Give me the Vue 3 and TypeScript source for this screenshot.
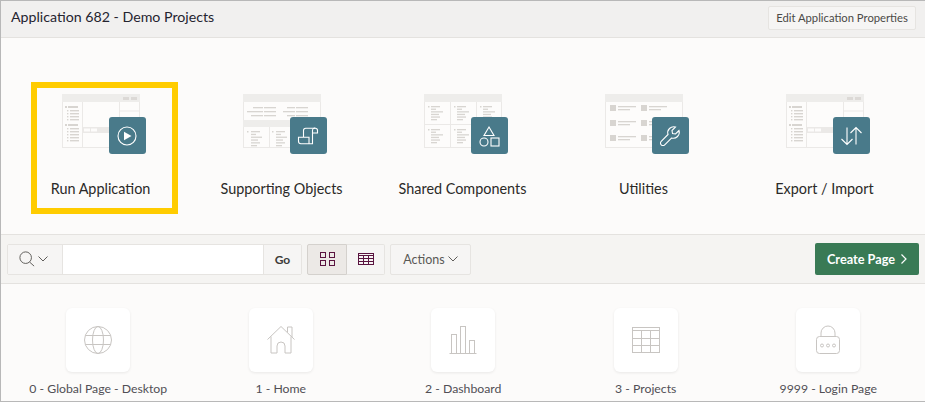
<template>
  <div class="page">
    <header class="title_bar">
      <h1 class="title">Application 682 - Demo Projects</h1>
      <button class="edit_btn">Edit Application Properties</button>
    </header>

    <section class="tiles">
      <a v-for="tile in tiles" :key="tile.label" class="tile">
        <div class="art">
          <!-- 页面线框图 -->
          <svg class="wire" width="78" height="54" viewBox="0 0 78 54">
            <rect x="0.5" y="0.5" width="77" height="53" fill="#fdfcfb" stroke="#ebe9e7" />
            <rect x="0" y="0" width="78" height="8" fill="#eeedeb" />

            <g v-if="tile.wire === 'builder'">
              <rect x="61" y="3" width="6" height="3" fill="#dcd9d6" />
              <rect x="69" y="3" width="6" height="3" fill="#dcd9d6" />
              <path d="M20.5 8V54M57.5 8V54M57.5 17H78M57.5 29H78" stroke="#ebe9e7" fill="none" />
              <rect x="21" y="33" width="37" height="6" fill="#ebe9e7" />
              <rect x="22" y="34.5" width="6" height="3" fill="#fdfcfb" />
              <rect x="29" y="34.5" width="6" height="3" fill="#fdfcfb" />
              <rect x="3" y="12" width="2" height="2" fill="#d8d5d1" />
              <rect x="6" y="12" width="10" height="2" fill="#d8d5d1" />
              <rect x="3" y="30" width="2" height="2" fill="#d8d5d1" />
              <rect x="6" y="30" width="10" height="2" fill="#d8d5d1" />
              <rect v-for="y in [16, 19, 22, 25, 34, 37, 40, 43, 46]" :key="y" x="8" :y="y" width="9" height="1.4" fill="#d8d5d1" />
              <rect v-for="y in [16, 19, 22, 25, 34, 37, 40, 43, 46]" :key="'d' + y" x="5" :y="y" width="1.4" height="1.4" fill="#d8d5d1" />
            </g>

            <g v-if="tile.wire === 'objects'">
              <path d="M26.5 33V54M52.5 33V54" stroke="#ebe9e7" fill="none" />
              <rect x="0" y="26" width="78" height="7" fill="#eeedeb" />
              <g fill="#d8d5d1">
                <rect v-for="r in formLines" :key="r.x + '-' + r.y" :x="r.x" :y="r.y" :width="r.w" height="1.3" />
                <rect v-for="c in [4, 29, 54]" :key="c" :x="c" y="37" width="1.5" height="1.5" />
                <template v-for="c in [8, 33, 58]" :key="c">
                  <rect v-for="(w, i) in [9, 5, 11, 7, 9, 6]" :key="i" :x="c" :y="37 + i * 2.8" :width="w" height="1.3" />
                </template>
              </g>
            </g>

            <g v-if="tile.wire === 'shared'">
              <path d="M26.5 8V54M52.5 8V54M0 30.5H78" stroke="#ebe9e7" fill="none" />
              <g fill="#d8d5d1">
                <template v-for="row in [12, 35]" :key="row">
                  <template v-for="c in [4, 30, 56]" :key="c">
                    <rect :x="c" :y="row" width="1.5" height="1.5" />
                    <rect v-for="(w, i) in [9, 5, 12, 8, 9, 6]" :key="i" :x="c + 3" :y="row + i * 2.6" :width="w" height="1.3" />
                  </template>
                </template>
              </g>
            </g>

            <g v-if="tile.wire === 'list'">
              <g v-for="y in [13, 28, 43]" :key="y" fill="#d8d5d1">
                <template v-for="x in [5, 36]" :key="x">
                  <rect :x="x" :y="y - 2" width="6" height="6" />
                  <rect :x="x + 8" :y="y - 1" width="18" height="1.3" />
                  <rect :x="x + 8" :y="y + 2" width="12" height="1.3" />
                </template>
              </g>
            </g>
          </svg>

          <!-- 图标块 -->
          <div class="badge">
            <svg width="24" height="24" viewBox="0 0 24 24" fill="none" stroke="#fff" stroke-width="1.1">
              <g v-if="tile.badge === 'play'">
                <circle cx="12" cy="12" r="9" />
                <path d="M9 7.8L16.5 12L9 16.2Z" fill="#fff" stroke="none" />
              </g>
              <g v-if="tile.badge === 'scroll'">
                <path d="M7.5 13V6.5A2.3 2.3 0 0 1 9.8 4.2H19.300A2.200 2.200 0 0 1 21.500 6.400V9H16.500" />
                <path d="M19.300 4.200A2.200 2.200 0 0 0 16.500 6.400V19.800H5A2.500 2.500 0 0 1 2.500 17.300V13.200H13V19.800" />
              </g>
              <g v-if="tile.badge === 'shapes'">
                <path d="M12 3L17 11.5H7Z" />
                <circle cx="7" cy="18" r="4" />
                <rect x="14" y="14" width="8" height="8" />
              </g>
              <g v-if="tile.badge === 'wrench'">
                <path d="M21 6.5L17.5 10L14.5 9.5L14 6.5L17.5 3A6 6 0 0 0 10 10.5L3.2 17.3A2.4 2.4 0 0 0 6.7 20.8L13.5 14A6 6 0 0 0 21 6.5Z" />
              </g>
              <g v-if="tile.badge === 'arrows'">
                <path d="M8 3.5V20.5M2.5 15L8 20.5L13.5 15" />
                <path d="M17 20.5V3.5M11.5 9L17 3.5L22.5 9" />
              </g>
            </svg>
          </div>
        </div>
        <span class="tile_label">{{ tile.label }}</span>
      </a>
      <div class="highlight"></div>
    </section>

    <section class="toolbar">
      <div class="search">
        <button class="search_icon">
          <svg width="16" height="16" viewBox="0 0 18 18" fill="none" stroke="#5f5d5a" stroke-width="1.100">
            <circle cx="7.5" cy="7.5" r="6.5" />
            <path d="M12 12.5L17 17" />
          </svg>
          <svg width="10" height="6" viewBox="0 0 10 6" fill="none" stroke="#5f5d5a" stroke-width="1">
            <path d="M0.5 0.5L5 5L9.500 0.5" />
          </svg>
        </button>
        <div class="search_input"></div>
        <button class="go">Go</button>
      </div>

      <div class="views">
        <button class="view active">
          <svg width="15" height="14" viewBox="0 0 15 14" fill="none" stroke="#5a1440" stroke-width="1">
            <rect x="0.500" y="0.500" width="5" height="5" />
            <rect x="9.500" y="0.500" width="5" height="5" />
            <rect x="0.500" y="8.500" width="5" height="5" />
            <rect x="9.500" y="8.500" width="5" height="5" />
          </svg>
        </button>
        <button class="view">
          <svg width="16" height="12" viewBox="0 0 16 12" fill="none" stroke="#5a1440" stroke-width="1">
            <rect x="0.500" y="0.500" width="15" height="11" />
            <path d="M0.500 2.500H15.500M0.500 5.500H15.500M0.500 8.500H15.500M5.500 2.500V11.500M10.500 2.500V11.500" />
          </svg>
        </button>
      </div>

      <button class="actions">
        Actions
        <svg width="10" height="6" viewBox="0 0 10 6" fill="none" stroke="#5f5d5a" stroke-width="1">
          <path d="M0.500 0.500L5 5L9.500 0.500" />
        </svg>
      </button>

      <button class="create">
        Create Page
        <svg width="6" height="10" viewBox="0 0 6 10" fill="none" stroke="#fff" stroke-width="1.200">
          <path d="M0.500 0.500L5 5L0.500 9.500" />
        </svg>
      </button>
    </section>

    <section class="pages">
      <a v-for="p in pages" :key="p.label" class="page_item">
        <div class="page_card">
          <svg width="30" height="30" viewBox="0 0 30 30" fill="none" stroke="#c8c5c2" stroke-width="1">
            <g v-if="p.icon === 'globe'">
              <circle cx="15" cy="15" r="13.500" />
              <ellipse cx="15" cy="15" rx="5.500" ry="13.500" />
              <path d="M2.500 10.500H27.500M2.500 19.500H27.500" />
            </g>
            <g v-if="p.icon === 'home'">
              <path d="M1.500 14.500L15 1.500L28.500 14.500" />
              <path d="M5 11.500V28H11V21A4 4 0 0 1 19 21V28H25V11.500" />
              <path d="M21.500 7.500V2H26V12" />
            </g>
            <g v-if="p.icon === 'chart'">
              <rect x="3.500" y="9.500" width="5" height="19" />
              <rect x="12.500" y="1.500" width="5" height="27" />
              <rect x="21.500" y="15.500" width="5" height="13" />
              <path d="M1.500 28.500H28.500" />
            </g>
            <g v-if="p.icon === 'table'">
              <rect x="1.500" y="2.500" width="27" height="25" />
              <path d="M1.500 5.500H28.500M1.500 13.500H28.500M1.500 20.500H28.500M10.500 5.500V27.500M19.500 5.500V27.500" />
            </g>
            <g v-if="p.icon === 'lock'">
              <rect x="3.500" y="11.500" width="23" height="17" rx="3" />
              <path d="M8 11.500V8A7 7 0 0 1 22 8V11.500" />
              <circle cx="9" cy="20.500" r="1.500" />
              <circle cx="15" cy="20.500" r="1.500" />
              <circle cx="21" cy="20.500" r="1.500" />
            </g>
          </svg>
        </div>
        <span class="page_label">{{ p.label }}</span>
      </a>
    </section>
  </div>
</template>

<script setup lang="ts">
const tiles = [
  { label: 'Run Application', wire: 'builder', badge: 'play' },
  { label: 'Supporting Objects', wire: 'objects', badge: 'scroll' },
  { label: 'Shared Components', wire: 'shared', badge: 'shapes' },
  { label: 'Utilities', wire: 'list', badge: 'wrench' },
  { label: 'Export / Import', wire: 'builder', badge: 'arrows' },
]

const pages = [
  { label: '0 - Global Page - Desktop', icon: 'globe' },
  { label: '1 - Home', icon: 'home' },
  { label: '2 - Dashboard', icon: 'chart' },
  { label: '3 - Projects', icon: 'table' },
  { label: '9999 - Login Page', icon: 'lock' },
]

// 上半部分的表单线条
const formLines = [
  { x: 10, y: 13, w: 10 }, { x: 21, y: 13, w: 12 }, { x: 4, y: 17, w: 16 }, { x: 21, y: 17, w: 12 }, { x: 8, y: 21, w: 12 }, { x: 21, y: 21, w: 12 },
  { x: 44, y: 13, w: 8 }, { x: 53, y: 13, w: 12 }, { x: 40, y: 17, w: 12 }, { x: 53, y: 17, w: 12 }, { x: 44, y: 21, w: 8 }, { x: 53, y: 21, w: 12 },
]
</script>

<style>
html,
body {
  margin: 0;
  background: #fcfbfa;
}
</style>

<style scoped>
.page {
  box-sizing: border-box;
  width: 925px;
  height: 402px;
  overflow: hidden;
  display: flex;
  flex-direction: column;
  border-top: 1px solid #b8b8b8;
  border-left: 1px solid #b8b8b8;
  border-bottom: 1px solid #b8b8b8;
  background: #fcfbfa;
  font-family: Lato, "Open Sans", sans-serif;
  color: #2b2a28;
}

button {
  font-family: inherit;
  cursor: pointer;
}

.title_bar {
  height: 37px;
  flex: none;
  box-sizing: border-box;
  display: flex;
  align-items: center;
  justify-content: space-between;
  padding: 0 9px 3px 10px;
  background: #f1f0ef;
  border-bottom: 1px solid #e4e2df;
}

.title {
  margin: 0 0 2px;
  font-size: 14.200px;
  font-weight: 400;
  color: #25242f;
}

.edit_btn {
  height: 24px;
  width: 148px;
  padding: 0;
  font-size: 11.250px;
  color: #4a4946;
  background: #f6f5f4;
  border: 1px solid #e6e4e1;
  border-radius: 2px;
}

.tiles {
  position: relative;
  height: 196px;
  flex: none;
  box-sizing: border-box;
  display: grid;
  grid-template-columns: repeat(5, 181px);
  padding: 56px 0 0 9px;
}

.tile {
  display: flex;
  flex-direction: column;
  align-items: center;
}

.art {
  position: relative;
  width: 78px;
  height: 60px;
}

.wire {
  display: block;
}

.badge {
  position: absolute;
  left: 47px;
  top: 23px;
  width: 37px;
  height: 37px;
  display: flex;
  align-items: center;
  justify-content: center;
  border-radius: 3px;
  background: #497a8a;
}

.tile_label {
  margin-top: 25px;
  font-size: 14.400px;
  line-height: 20px;
  white-space: nowrap;
}

/* 黄色标注框 */
.highlight {
  position: absolute;
  left: 30px;
  top: 44px;
  width: 147px;
  height: 132px;
  box-sizing: border-box;
  border: 6px solid #ffcc00;
}

.toolbar {
  height: 50px;
  flex: none;
  box-sizing: border-box;
  display: flex;
  align-items: center;
  gap: 5px;
  padding: 0 6px 0 6px;
  background: #f5f4f2;
  border-top: 1px solid #e4e2df;
  border-bottom: 1px solid #e4e2df;
}

.search {
  width: 295px;
  height: 31px;
  box-sizing: border-box;
  display: flex;
  border: 1px solid #e6e4e1;
  border-radius: 2px;
}

.search_icon {
  width: 55px;
  display: flex;
  align-items: center;
  justify-content: center;
  gap: 3px;
  padding: 0 4px 0 0;
  border: 0;
  border-right: 1px solid #e6e4e1;
  background: #f6f5f4;
}

.search_input {
  flex: 1;
  background: #fff;
}

.go {
  width: 38px;
  padding: 0;
  border: 0;
  border-left: 1px solid #e6e4e1;
  background: #f6f5f4;
  font-size: 12px;
  font-weight: 700;
  color: #3c3b39;
}

.views {
  display: flex;
  height: 31px;
}

.view {
  width: 38px;
  display: flex;
  align-items: center;
  justify-content: center;
  padding: 0;
  background: #f6f5f4;
  border: 1px solid #e6e4e1;
  border-left: 0;
  border-radius: 0 2px 2px 0;
}

.view.active {
  width: 40px;
  background: #ece9e6;
  border: 1px solid #d4d1cd;
  border-radius: 2px 0 0 2px;
}

.actions {
  height: 31px;
  width: 81px;
  display: flex;
  align-items: center;
  justify-content: center;
  gap: 3px;
  padding: 0;
  font-size: 12.500px;
  color: #5a5956;
  background: #f6f5f4;
  border: 1px solid #e6e4e1;
  border-radius: 2px;
}

.create {
  margin-left: auto;
  width: 104px;
  height: 32px;
  display: flex;
  align-items: center;
  justify-content: center;
  gap: 6px;
  padding: 0;
  font-size: 12.700px;
  font-weight: 700;
  color: #fff;
  background: #397a55;
  border: 0;
  border-radius: 2px;
}

.pages {
  display: grid;
  grid-template-columns: repeat(5, 182.500px);
  padding: 24px 0 0 6px;
}

.page_item {
  display: flex;
  flex-direction: column;
  align-items: center;
}

.page_card {
  width: 64px;
  height: 64px;
  display: flex;
  align-items: center;
  justify-content: center;
  background: #fff;
  border-radius: 6px;
  box-shadow: 0 1px 3px rgba(0, 0, 0, 0.08);
}

.page_label {
  margin-top: 8px;
  font-size: 12.250px;
  line-height: 18px;
  color: #514f55;
  white-space: nowrap;
}
</style>
